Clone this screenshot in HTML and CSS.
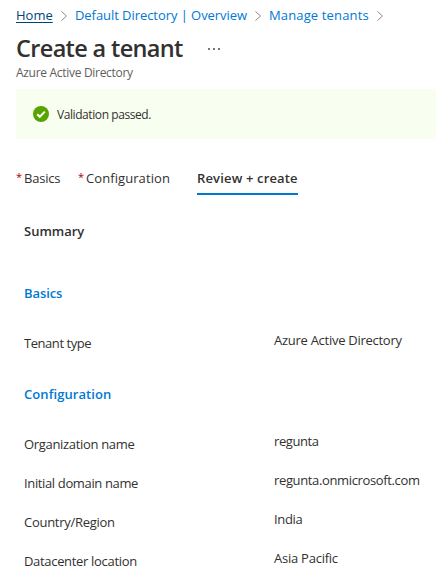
FILE: index.html
```html
<!DOCTYPE html>
<html lang="en">
<head>
<meta charset="utf-8">
<title>Create a tenant</title>
<link rel="stylesheet" href="styles.css">
</head>
<body>
<nav class="crumbs">
  <a class="home">Home</a>
  <svg class="chevron" viewBox="0 0 6 10"><path d="M.5 .5l5 4.5-5 4.5"/></svg>
  <a class="directory">Default Directory | Overview</a>
  <svg class="chevron" viewBox="0 0 6 10"><path d="M.5 .5l5 4.5-5 4.5"/></svg>
  <a class="manage">Manage tenants</a>
  <svg class="chevron" viewBox="0 0 6 10"><path d="M.5 .5l5 4.5-5 4.5"/></svg>
</nav>
<header>
  <div class="heading">
    <h1>Create a tenant</h1>
    <svg class="more" viewBox="0 0 12 2"><path d="M0 0h2v2H0zM5 0h2v2H5zM10 0h2v2h-2z"/></svg>
  </div>
  <p class="subtitle">Azure Active Directory</p>
</header>
<div class="notice">
  <svg class="check" viewBox="0 0 16 16"><circle cx="8" cy="8" r="8"/><path d="M4.2 8.2l2.6 2.6 5-5.2"/></svg>
  <span>Validation passed.</span>
</div>
<div class="tabs">
  <div class="tab basics"><b>*</b><span>Basics</span></div>
  <div class="tab config"><b>*</b><span>Configuration</span></div>
  <div class="tab active"><span>Review + create</span></div>
</div>
<main>
  <h2 class="summary">Summary</h2>
  <h3 class="section-basics">Basics</h3>
  <dl class="first">
    <div class="row"><dt class="type">Tenant type</dt><dd class="aad">Azure Active Directory</dd></div>
  </dl>
  <h3 class="section-config">Configuration</h3>
  <dl>
    <div class="row"><dt class="org">Organization name</dt><dd class="org-value">regunta</dd></div>
    <div class="row"><dt class="domain">Initial domain name</dt><dd class="domain-value">regunta.onmicrosoft.com</dd></div>
    <div class="row"><dt class="country">Country/Region</dt><dd class="country-value">India</dd></div>
    <div class="row"><dt class="location">Datacenter location</dt><dd class="location-value">Asia Pacific</dd></div>
  </dl>
</main>
</body>
</html>
```
FILE: styles.css
```css
* { box-sizing: border-box; }
body, h1, h2, h3, p, dl, dd { margin: 0; }
body {
  height: 575px;
  overflow: hidden;
  background: #fff;
  color: #323130;
  font: 13px/20px "Open Sans", "Noto Sans", sans-serif;
  white-space: nowrap;
}
.crumbs { display: flex; height: 31px; padding: 5px 0 0 16px; color: #0078d4; }
.home { width: 37px; color: #004578; text-decoration: underline; text-underline-offset: 2px; }
.directory { width: 172px; letter-spacing: -0.06px; }
.manage { width: 100px; letter-spacing: 0.14px; }
.chevron { width: 6px; height: 10px; margin: 6px 8px; fill: none; stroke: #8a8886; }
header { height: 58px; padding-left: 16px; }
.heading { display: flex; height: 34px; }
h1 { width: 192px; font-size: 23.5px; line-height: 34px; font-weight: 600; letter-spacing: -0.65px; }
.more { width: 12px; height: 2px; margin-top: 17px; fill: #797775; }
.subtitle { color: #605e5c; font-size: 12px; line-height: 16px; letter-spacing: -0.3px; }
.notice { display: flex; gap: 8px; height: 50px; margin-left: 16px; padding: 16px 17px; background: #f8fff0; font-size: 12px; line-height: 19px; letter-spacing: -0.42px; }
.check { width: 16px; height: 16px; margin-top: 1px; fill: #57a300; }
.check path { fill: none; stroke: #fff; stroke-width: 2; }
.tabs { display: flex; height: 56px; padding: 29px 0 0 16px; }
.tab { display: flex; height: 27px; }
.tab b { width: 8px; color: #a80000; font-size: 11px; font-weight: 400; line-height: 17px; }
.basics { width: 62px; letter-spacing: -0.2px; }
.config { width: 119px; letter-spacing: 0.08px; }
.active { border-bottom: 2px solid #0078d4; width: 101px; font-weight: 600; letter-spacing: 0.16px; }
main { padding: 26px 0 0 24px; }
h2, h3 { height: 20px; font-size: 13px; font-weight: 600; }
h3 { color: #0078d4; margin-top: 42px; }
dl { padding-top: 27px; }
.row { display: grid; grid-template-columns: 250px 1fr; height: 39px; letter-spacing: -0.32px; }
dt { padding-top: 3px; }
.type { letter-spacing: -0.45px; }
.country { letter-spacing: -0.28px; }
.domain, .domain-value { letter-spacing: -0.36px; }
.aad { letter-spacing: -0.27px; }
.org-value { letter-spacing: -0.42px; }
.location-value { letter-spacing: -0.24px; }
.section-basics { letter-spacing: -0.1px; }
.section-config { margin-top: 15px; letter-spacing: 0.08px; }
```
